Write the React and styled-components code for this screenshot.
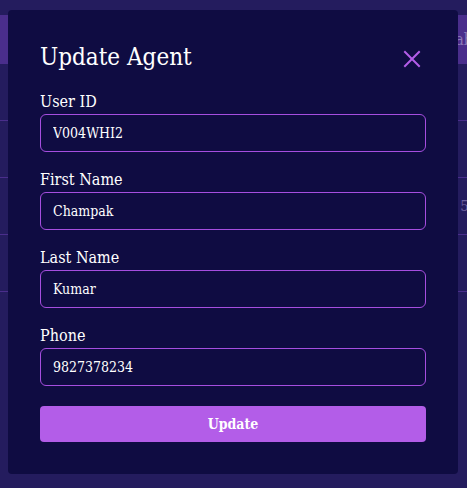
import React from "react";
import styled, { createGlobalStyle } from "styled-components";

const Global = createGlobalStyle`
  html, body { margin: 0; padding: 0; }
  body {
    width: 467px; height: 488px; overflow: hidden;
    background: #241c5e;
    font-family: "DejaVu Serif Condensed", "DejaVu Serif", serif;
  }
`;

const Page = styled.div`
  position: relative;
  width: 467px;
  height: 488px;
  background: #241c5e;
  padding-top: 15px;
  box-sizing: border-box;
`;

const Table = styled.div`
  display: flex;
  flex-direction: column;
`;

const HeadRow = styled.div`
  height: 49px;
  background: #4a2e8c;
  display: flex;
  align-items: center;
  justify-content: flex-end;
  color: #8b79b8;
  font-size: 16px;
  overflow: hidden;
`;

const Row = styled.div`
  height: 56px;
  border-bottom: 1px solid #4a2e8c;
  display: flex;
  align-items: center;
  justify-content: flex-end;
  color: #6e61a0;
  font-size: 15px;
  overflow: hidden;
`;

const Peek = styled.span`
  margin-right: -6px;
`;

const Modal = styled.div`
  position: absolute;
  left: 8px;
  top: 10px;
  width: 450px;
  height: 464px;
  box-sizing: border-box;
  background: #0f0c42;
  border-radius: 4px;
  padding: 32px;
  display: flex;
  flex-direction: column;
`;

const Header = styled.div`
  display: flex;
  align-items: flex-start;
  justify-content: space-between;
  height: 29px;
  margin-top: 1px;
  margin-bottom: 18px;
`;

const Title = styled.h2`
  margin: 0;
  font-weight: 400;
  font-size: 24px;
  line-height: 29px;
  color: #ffffff;
`;

const Close = styled.button`
  background: none;
  border: 0;
  padding: 0;
  width: 18px;
  height: 18px;
  margin: 7px 5px 0 0;
  display: flex;
  cursor: pointer;
`;

const Field = styled.div`
  display: flex;
  flex-direction: column;
  margin-bottom: 16px;
`;

const Label = styled.label`
  font-size: 16px;
  line-height: 24px;
  color: #ffffff;
`;

const Input = styled.input`
  height: 38px;
  box-sizing: border-box;
  border: 1px solid #a64ee0;
  border-radius: 6px;
  background: transparent;
  color: #ffffff;
  font-family: inherit;
  font-size: 14px;
  padding: 0 12px;
  outline: none;
`;

const Button = styled.button`
  margin-top: 4px;
  height: 36px;
  border: 0;
  border-radius: 4px;
  background: #b35de8;
  color: #ffffff;
  font-family: inherit;
  font-weight: 700;
  font-size: 14px;
  cursor: pointer;
`;

const fields = [
  ["User ID", "V004WHI2"],
  ["First Name", "Champak"],
  ["Last Name", "Kumar"],
  ["Phone", "9827378234"],
];

export default function App() {
  return (
    <Page>
      <Global />
      <Table>
        <HeadRow><Peek>ab</Peek></HeadRow>
        <Row />
        <Row />
        <Row><Peek>5j</Peek></Row>
        <Row />
      </Table>
      <Modal>
        <Header>
          <Title>Update Agent</Title>
          <Close aria-label="close">
            <svg width="18" height="18" viewBox="0 0 18 18">
              <path d="M2 2 L16 16 M16 2 L2 16" stroke="#b35de8" strokeWidth="2" strokeLinecap="square" />
            </svg>
          </Close>
        </Header>
        {fields.map(([l, v]) => (
          <Field key={l}>
            <Label>{l}</Label>
            <Input defaultValue={v} />
          </Field>
        ))}
        <Button>Update</Button>
      </Modal>
    </Page>
  );
}
